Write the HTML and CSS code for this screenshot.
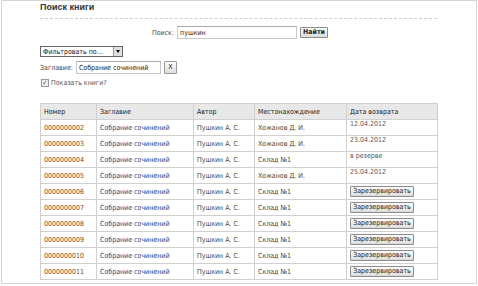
FILE: index.html
```html
<!DOCTYPE html>
<html>
<head>
  <meta charset="UTF-8">
  <link rel="stylesheet" href="styles.css">
  <title>Поиск книги</title>
</head>
<body>
  <div class="frame">
    <div class="box">
      <h1 class="title">Поиск книги</h1>

      <form class="search">
        <label for="q">Поиск:</label>
        <input type="text" id="q" class="text wide" value="пушкин">
        <button type="button" class="btn">Найти</button>
      </form>

      <div class="filter">
        <span class="select">Фильтровать по...<span class="arrow"></span></span>
      </div>

      <div class="field">
        <label for="t">Заглавие:</label>
        <input type="text" id="t" class="text" value="Собрание сочинений">
        <button type="button" class="btn small">X</button>
      </div>

      <label class="check"><span class="box-check">&#10003;</span>Показать книги?</label>

      <table class="books">
        <thead>
          <tr>
            <th class="c1">Номер</th>
            <th class="c2">Заглавие</th>
            <th class="c3">Автор</th>
            <th class="c4">Местонахождение</th>
            <th class="c5">Дата возврата</th>
          </tr>
        </thead>
        <tbody>
          <tr><td class="num">0000000002</td><td class="name">Собрание сочинений</td><td>Пушкин А. С.</td><td>Хожанов Д. И.</td><td class="date">12.04.2012</td></tr>
          <tr><td class="num">0000000003</td><td class="name">Собрание сочинений</td><td>Пушкин А. С.</td><td>Хожанов Д. И.</td><td class="date">23.04.2012</td></tr>
          <tr><td class="num">0000000004</td><td class="name">Собрание сочинений</td><td>Пушкин А. С.</td><td>Склад №1</td><td class="date">в резерве</td></tr>
          <tr><td class="num">0000000005</td><td class="name">Собрание сочинений</td><td>Пушкин А. С.</td><td>Хожанов Д. И.</td><td class="date">25.04.2012</td></tr>
          <tr><td class="num">0000000006</td><td class="name">Собрание сочинений</td><td>Пушкин А. С.</td><td>Склад №1</td><td><button type="button" class="btn reserve">Зарезервировать</button></td></tr>
          <tr><td class="num">0000000007</td><td class="name">Собрание сочинений</td><td>Пушкин А. С.</td><td>Склад №1</td><td><button type="button" class="btn reserve">Зарезервировать</button></td></tr>
          <tr><td class="num">0000000008</td><td class="name">Собрание сочинений</td><td>Пушкин А. С.</td><td>Склад №1</td><td><button type="button" class="btn reserve">Зарезервировать</button></td></tr>
          <tr><td class="num">0000000009</td><td class="name">Собрание сочинений</td><td>Пушкин А. С.</td><td>Склад №1</td><td><button type="button" class="btn reserve">Зарезервировать</button></td></tr>
          <tr><td class="num">0000000010</td><td class="name">Собрание сочинений</td><td>Пушкин А. С.</td><td>Склад №1</td><td><button type="button" class="btn reserve">Зарезервировать</button></td></tr>
          <tr><td class="num">0000000011</td><td class="name">Собрание сочинений</td><td>Пушкин А. С.</td><td>Склад №1</td><td><button type="button" class="btn reserve">Зарезервировать</button></td></tr>
        </tbody>
      </table>
    </div>
  </div>
</body>
</html>
```

FILE: styles.css
```css
* {
  margin: 0;
  padding: 0;
  box-sizing: border-box;
}

body {
  font-family: "DejaVu Sans Condensed", "DejaVu Sans", Verdana, sans-serif;
  font-stretch: condensed;
  font-size: 7px;
  color: #444;
  background: #fff;
}

.frame {
  margin-left: 1px;
  width: 476px;
  height: 284px;
  border: 1px solid #d4d4d4;
  padding-left: 38px;
}

.box {
  width: 397px;
}

.title {
  font-family: "Liberation Sans", Arial, sans-serif;
  font-stretch: normal;
  font-size: 9px;
  font-weight: bold;
  color: #333;
  line-height: 13px;
  padding-bottom: 4px;
  border-bottom: 1px dashed #cfcfcf;
}

.search {
  margin-top: 7px;
  display: flex;
  justify-content: center;
  align-items: center;
  gap: 3px;
  padding-left: 3px;
}

.text {
  height: 13px;
  border: 1px solid #c8c8c8;
  border-top-color: #a8a8a8;
  font-family: inherit;
  font-stretch: condensed;
  font-size: 7px;
  color: #222;
  padding: 0 2px;
}

.wide {
  width: 120px;
}

.btn {
  height: 11px;
  padding: 0 3px;
  border: 1px solid #8a8a8a;
  border-radius: 1px;
  background: linear-gradient(#fdfdfd, #dcdcdc);
  font-family: inherit;
  font-stretch: condensed;
  font-size: 7px;
  line-height: 9px;
  color: #222;
}

.search .btn {
  font-weight: bold;
  padding: 0 2px;
}

.filter {
  margin-top: 7px;
  height: 11px;
}

.select {
  display: inline-flex;
  align-items: center;
  justify-content: space-between;
  width: 83px;
  height: 11px;
  border: 1px solid #666;
  padding-left: 2px;
  color: #111;
}

.arrow {
  width: 9px;
  height: 9px;
  background: #e0e0e0;
  border-left: 1px solid #999;
  position: relative;
}

.arrow::after {
  content: "";
  position: absolute;
  left: 2px;
  top: 3px;
  border-left: 2px solid transparent;
  border-right: 2px solid transparent;
  border-top: 3px solid #000;
}

.field {
  margin-top: 4px;
  display: flex;
  align-items: center;
  gap: 3px;
}

.field .text {
  width: 85px;
}

.small {
  height: 13px;
  width: 13px;
  padding: 0;
  border-color: #999;
}

.check {
  margin-top: 4px;
  display: flex;
  align-items: center;
  gap: 2px;
  height: 10px;
  padding-left: 1px;
  color: #555;
}

.box-check {
  width: 8px;
  height: 8px;
  border: 1px solid #999;
  background: #eee;
  font-size: 7px;
  line-height: 6px;
  color: #4a5a7a;
  text-align: center;
}

.books {
  margin-top: 15px;
  width: 397px;
  border-collapse: collapse;
  table-layout: fixed;
}

.books th,
.books td {
  border: 1px solid #d0d0d0;
  height: 16px;
  padding: 0 3px;
  text-align: left;
  font-weight: normal;
  white-space: nowrap;
  color: #444;
}

.books th {
  background: #e8e8e8;
  color: #222;
}

.c1 { width: 56px; }
.c2 { width: 97px; }
.c3 { width: 61px; }
.c4 { width: 92px; }
.c5 { width: 91px; }

.books .num {
  color: #7a3f1c;
}

.books .name {
  color: #2a4474;
}

.books .date {
  vertical-align: top;
  color: #556;
}

.reserve {
  width: 64px;
  height: 11px;
  padding: 0;
}
```
